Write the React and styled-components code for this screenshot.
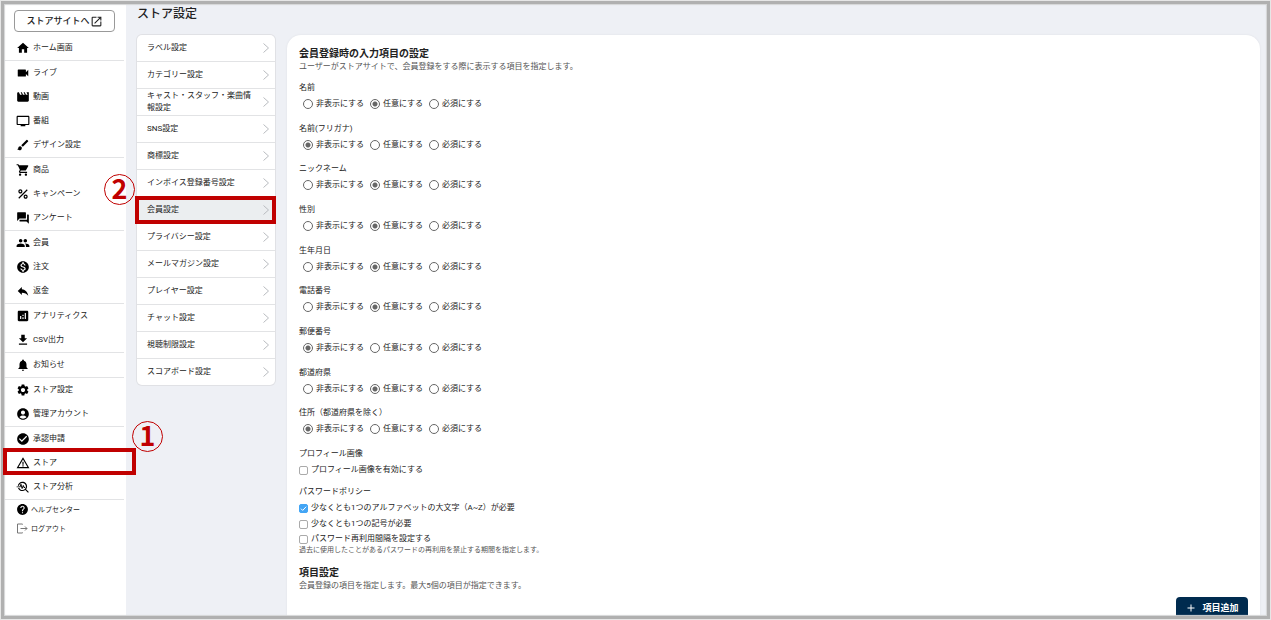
import React from "react";
import styled, { createGlobalStyle, css } from "styled-components";
import {
  MdHome, MdVideocam, MdMovie, MdTv, MdBrush, MdShoppingCart, MdPercent, MdForum,
  MdPeople, MdMonetizationOn, MdReply, MdAnalytics, MdDownload, MdNotifications,
  MdSettings, MdAccountCircle, MdCheckCircle, MdWarningAmber, MdTroubleshoot,
  MdHelp, MdOpenInNew, MdAdd,
} from "react-icons/md";

const GlobalStyle = createGlobalStyle`
  * { box-sizing: border-box; }
  body {
    margin: 0;
    background: #eef0f5;
    color: #222;
    font-family: Roboto, "Noto Sans CJK JP", sans-serif;
    font-size: 8px;
    line-height: 12px;
  }
  a { color: inherit; text-decoration: none; }
  ul { list-style: none; margin: 0; padding: 0; }
  h1, h2, p { margin: 0; }
`;

const Page = styled.div`
  position: relative;
  display: flex;
  height: 100vh;
  padding: 4px;
  overflow: hidden;

  &::after {
    content: "";
    position: absolute;
    inset: 1px;
    z-index: 1;
    border: 3px solid #b0b0b0;
    outline: 1px solid #e6e6e6;
    box-shadow: inset 0 0 1px 1px #d4d5d6;
    pointer-events: none;
  }
`;

const Sidebar = styled.aside`
  flex: 0 0 122px;
  background: #fff;
  padding-top: 6px;
`;

const SiteButton = styled.button`
  display: flex;
  align-items: center;
  justify-content: center;
  width: 101px;
  height: 22px;
  margin: 0 0 4px 10px;
  padding: 0;
  border: 1px solid #999;
  border-radius: 4px;
  background: #fff;
  color: #222;
  font: inherit;
  font-size: 9px;
  font-weight: 500;

  svg { width: 13px; height: 13px; }
`;

const Group = styled.ul`
  margin-right: 2px;
  border-bottom: 1px solid #e2e3e5;

  &:last-child { border-bottom: 0; }
`;

const NavItem = styled.li`
  position: relative;
`;

const NavLink = styled.a`
  display: flex;
  align-items: center;
  gap: ${(p) => (p.$small ? 2 : 3)}px;
  height: ${(p) => (p.$small ? 19 : 24)}px;
  padding-left: 12px;
  font-size: ${(p) => (p.$small ? 7 : 8)}px;

  svg {
    width: ${(p) => (p.$small ? 13 : 14)}px;
    height: ${(p) => (p.$small ? 13 : 14)}px;
    color: #000;
  }
`;

const Highlight = styled.span`
  position: absolute;
  z-index: 2;
  inset: ${(p) => p.$inset};
  border: 4px solid #c00000;
  pointer-events: none;
`;

const StepMark = styled.span`
  position: absolute;
  z-index: 3;
  left: ${(p) => p.$left};
  top: ${(p) => p.$top};
  width: 31px;
  height: 31px;
  border: 1px solid #c00000;
  border-radius: 50%;
  color: #c00000;
  font-family: "Noto Sans CJK JP", sans-serif;
  font-size: 27px;
  font-weight: 700;
  line-height: 26px;
  text-align: center;
`;

const Content = styled.main`
  flex: 1;
  min-width: 0;
  padding: 0 7px 0 11px;
`;

const PageTitle = styled.h1`
  padding-bottom: 11px;
  font-size: 12px;
  font-weight: 500;
  line-height: 20px;
`;

const Columns = styled.div`
  display: flex;
  align-items: flex-start;
  gap: 12px;
`;

const SubMenu = styled.ul`
  flex: 0 0 138px;
  border-radius: 5px;
  background: #fff;
  box-shadow: 0 0 0 1px #e0e1e5;
`;

const SubItem = styled.li`
  position: relative;

  & + & { border-top: 1px solid #e2e3e5; }
`;

const SubLink = styled.a`
  display: flex;
  align-items: center;
  justify-content: space-between;
  height: 26px;
  padding: 0 5px 0 10px;
  ${(p) => p.$active && css`background: #ebeef0;`}

  svg { flex: none; width: 8px; height: 12px; }
`;

const SubLabel = styled.span`
  max-width: 110px;
`;

const Card = styled.section`
  flex: 1;
  min-width: 0;
  padding: 12px 12px 24px;
  border-radius: 14px;
  background: #fff;
  box-shadow: 0 0 2px #dcdde3;
`;

const SectionTitle = styled.h2`
  font-size: 10px;
  line-height: 14px;
  font-weight: 700;
`;

const Description = styled.p`
  color: #555;
  font-size: ${(p) => (p.$small ? 7 : 8)}px;
  line-height: ${(p) => (p.$small ? 8 : 12)}px;
`;

const FieldList = styled.div`
  display: grid;
  grid-auto-rows: 1fr;
  min-height: 366px;
  margin-top: 8px;
`;

const Fieldset = styled.fieldset`
  min-width: 0;
  margin: 0;
  padding: 0;
  border: 0;
`;

const Legend = styled.legend`
  padding: 0;
  line-height: 14px;
`;

const RadioRow = styled.div`
  display: grid;
  grid-template-columns: 67px 59px auto;
  padding: 2px 0 0 4px;
`;

const Choice = styled.label`
  display: flex;
  align-items: center;
  gap: 3px;
  height: ${(p) => p.$height || 14}px;
`;

const Radio = styled.input.attrs({ type: "radio" })`
  appearance: none;
  width: 10px;
  height: 10px;
  margin: 0;
  border: 1px solid #666;
  border-radius: 50%;
  background: #fff;

  &:checked { background: radial-gradient(circle, #666 0 2px, #fff 3px); }
`;

const Checkbox = styled.input.attrs({ type: "checkbox" })`
  appearance: none;
  position: absolute;
  inset: 0;
  margin: 0;
  border: 1px solid #aaa;
  border-radius: 2px;
  background: #fff;

  &:checked { border-color: #42a5f5; background: #42a5f5; }
`;

const CheckBoxHolder = styled.span`
  position: relative;
  width: 9px;
  height: 9px;

  svg { position: absolute; inset: 0; width: 9px; height: 9px; pointer-events: none; }
`;

const CheckFieldset = styled(Fieldset)`
  margin-bottom: 7px;
`;

const CheckRows = styled.div`
  padding-top: 1px;
`;

const ItemSection = styled.div`
  padding-top: 5px;
`;

const CardFooter = styled.div`
  display: flex;
  justify-content: flex-end;
  padding-top: 5px;
`;

const AddButton = styled.button`
  display: flex;
  align-items: center;
  justify-content: center;
  gap: 5px;
  width: 72px;
  height: 22px;
  padding: 0;
  border: 0;
  border-radius: 4px;
  background: #002b4f;
  color: #fff;
  font: inherit;
  font-size: 9px;
  font-weight: 700;

  svg { width: 12px; height: 12px; }
`;

function LogoutIcon() {
  return (
    <svg viewBox="0 0 13 13" fill="none" stroke="#777" aria-hidden="true">
      <path d="M6.5 2.5V2H1.5v9h5v-.5M4.5 6.5H11M9 4.5l2 2-2 2" />
    </svg>
  );
}

function Chevron() {
  return (
    <svg viewBox="0 0 8 12" fill="none" stroke="#b9bcc0" aria-hidden="true">
      <path d="M1.5 1.5 6.5 6l-5 4.5" />
    </svg>
  );
}

const navGroups = [
  [["ホーム画面", MdHome]],
  [["ライブ", MdVideocam], ["動画", MdMovie], ["番組", MdTv], ["デザイン設定", MdBrush]],
  [["商品", MdShoppingCart], ["キャンペーン", MdPercent], ["アンケート", MdForum]],
  [["会員", MdPeople], ["注文", MdMonetizationOn], ["返金", MdReply]],
  [["アナリティクス", MdAnalytics], ["CSV出力", MdDownload]],
  [["お知らせ", MdNotifications]],
  [["ストア設定", MdSettings], ["管理アカウント", MdAccountCircle]],
  [["承認申請", MdCheckCircle], ["ストア", MdWarningAmber], ["ストア分析", MdTroubleshoot]],
];

const helpLinks = [["ヘルプセンター", MdHelp], ["ログアウト", LogoutIcon]];

const subMenu = [
  "ラベル設定", "カテゴリー設定", "キャスト・スタッフ・楽曲情報設定", "SNS設定", "商標設定",
  "インボイス登録番号設定", "会員設定", "プライバシー設定", "メールマガジン設定",
  "プレイヤー設定", "チャット設定", "視聴制限設定", "スコアボード設定",
];

const options = ["非表示にする", "任意にする", "必須にする"];

const fields = [
  ["名前", 1], ["名前(フリガナ)", 0], ["ニックネーム", 1], ["性別", 1], ["生年月日", 1],
  ["電話番号", 1], ["郵便番号", 0], ["都道府県", 1], ["住所（都道府県を除く）", 0],
];

function CheckChoice({ label, checked, height }) {
  return (
    <Choice $height={height}>
      <CheckBoxHolder>
        <Checkbox defaultChecked={checked} />
        {checked && (
          <svg viewBox="0 0 9 9" fill="none" stroke="#fff" aria-hidden="true">
            <path d="M2 4.7 3.7 6.4 7.2 2.7" />
          </svg>
        )}
      </CheckBoxHolder>
      {label}
    </Choice>
  );
}

export default function App() {
  return (
    <>
      <GlobalStyle />
      <Page>
        <Sidebar>
          <SiteButton type="button">ストアサイトへ<MdOpenInNew /></SiteButton>
          <nav>
            {navGroups.map((group) => (
              <Group key={group[0][0]}>
                {group.map(([label, Icon]) => (
                  <NavItem key={label}>
                    <NavLink href="#"><Icon />{label}</NavLink>
                    {label === "ストア" && (
                      <>
                        <Highlight $inset="-3px -12px 0 -1px" />
                        <StepMark $left="128px" $top="-30px">1</StepMark>
                      </>
                    )}
                  </NavItem>
                ))}
              </Group>
            ))}
            <Group>
              {helpLinks.map(([label, Icon]) => (
                <NavItem key={label}>
                  <NavLink href="#" $small><Icon />{label}</NavLink>
                </NavItem>
              ))}
            </Group>
          </nav>
        </Sidebar>

        <Content>
          <PageTitle>ストア設定</PageTitle>
          <Columns>
            <SubMenu>
              {subMenu.map((label) => (
                <SubItem key={label}>
                  <SubLink href="#" $active={label === "会員設定"}>
                    <SubLabel>{label}</SubLabel>
                    <Chevron />
                  </SubLink>
                  {label === "会員設定" && (
                    <>
                      <Highlight $inset="-1px -1px -1px -2px" />
                      <StepMark $left="-33px" $top="-23px">2</StepMark>
                    </>
                  )}
                </SubItem>
              ))}
            </SubMenu>

            <Card>
              <SectionTitle>会員登録時の入力項目の設定</SectionTitle>
              <Description>ユーザーがストアサイトで、会員登録をする際に表示する項目を指定します。</Description>

              <FieldList>
                {fields.map(([label, selected]) => (
                  <Fieldset key={label}>
                    <Legend>{label}</Legend>
                    <RadioRow>
                      {options.map((option, i) => (
                        <Choice key={option}>
                          <Radio name={label} defaultChecked={i === selected} />
                          {option}
                        </Choice>
                      ))}
                    </RadioRow>
                  </Fieldset>
                ))}
              </FieldList>

              <CheckFieldset>
                <Legend>プロフィール画像</Legend>
                <CheckRows>
                  <CheckChoice label="プロフィール画像を有効にする" height={16} />
                </CheckRows>
              </CheckFieldset>
              <CheckFieldset>
                <Legend>パスワードポリシー</Legend>
                <CheckRows>
                  <CheckChoice label="少なくとも1つのアルファベットの大文字（A~Z）が必要" checked height={16} />
                  <CheckChoice label="少なくとも1つの記号が必要" height={16} />
                  <CheckChoice label="パスワード再利用間隔を設定する" height={14} />
                </CheckRows>
                <Description $small>過去に使用したことがあるパスワードの再利用を禁止する期間を指定します。</Description>
              </CheckFieldset>

              <ItemSection>
                <SectionTitle>項目設定</SectionTitle>
                <Description>会員登録の項目を指定します。最大5個の項目が指定できます。</Description>
                <CardFooter>
                  <AddButton type="button"><MdAdd />項目追加</AddButton>
                </CardFooter>
              </ItemSection>
            </Card>
          </Columns>
        </Content>
      </Page>
    </>
  );
}
